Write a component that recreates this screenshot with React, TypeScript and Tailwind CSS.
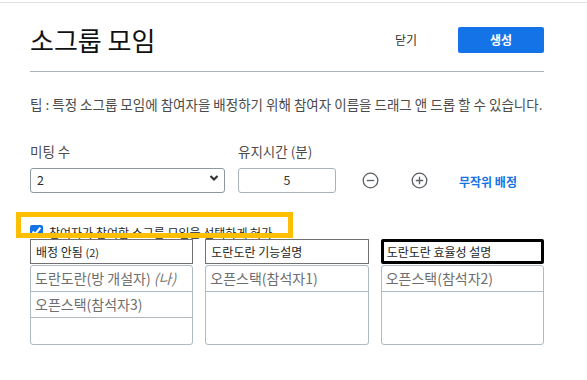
import React from "react";

const font = { fontFamily: '"Noto Sans CJK KR", "Noto Sans", sans-serif' };

function Column({ title, items, focused }: { title: React.ReactNode; items: React.ReactNode[]; focused?: boolean }) {
  return (
    <div className="flex flex-col">
      <div
        className={
          focused
            ? "h-[25px] border-[3px] border-black rounded-[2px] px-[3px] flex items-center text-[12px] text-[#1e1e1e]"
            : "h-[25px] border border-[#707070] px-[5px] flex items-center text-[12px] text-[#1e1e1e]"
        }
      >
        {title}
      </div>
      <div className="mt-[1px] h-[80px] border border-[#b0b8c0] rounded-[3px] overflow-hidden">
        {items.map((it, i) => (
          <div key={i} className="h-[26px] border-b border-[#b0b8c0] px-[4px] flex items-center text-[14px] text-[#6e6e6e]">
            {it}
          </div>
        ))}
      </div>
    </div>
  );
}

export default function App() {
  return (
    <div className="w-[587px] h-[380px] bg-white overflow-hidden" style={font}>
      <div className="mt-[2px] border-t border-[#e2e2e2]" />
      <div className="pl-[30px] w-[544px]">
        <div className="mt-[24px] h-[26px] flex items-center">
          <div className="text-[26px] text-[#111] leading-none flex-1">소그룹 모임</div>
          <div className="text-[12px] text-[#333] mr-[41px]">닫기</div>
          <button className="w-[86px] h-[26px] bg-[#1473e6] rounded-[2px] text-white text-[12px] font-bold">생성</button>
        </div>
        <div className="mt-[18px] border-b border-[#a6b2be]" />
        <div className="mt-[23px] text-[13.5px] text-[#4b4b4b] leading-[18px] whitespace-nowrap">
          팁 : 특정 소그룹 모임에 참여자을 배정하기 위해 참여자 이름을 드래그 앤 드롭 할 수 있습니다.
        </div>
        <div className="mt-[29px] flex text-[13.5px] text-[#4b4b4b] leading-[18px]">
          <div className="w-[208px]">미팅 수</div>
          <div>유지시간 (분)</div>
        </div>
        <div className="mt-[6px] flex items-start">
          <div className="relative w-[195px] h-[25px]">
            <select className="appearance-none w-full h-full border border-[#8f98a2] rounded-[3px] pl-[6px] text-[12.5px] text-[#2c2c2c] bg-white outline-none">
              <option>2</option>
            </select>
            <svg className="absolute right-[6px] top-[8px] pointer-events-none" width="10" height="8" viewBox="0 0 10 8">
              <path d="M1.5 2 L5 5.5 L8.5 2" fill="none" stroke="#333" strokeWidth="2.2" />
            </svg>
          </div>
          <div className="ml-[13px] mt-[2px] w-[98px] h-[25px] border border-[#a9b1b9] rounded-[3px] flex items-center justify-center text-[12.5px] text-[#333]">
            5
          </div>
          <svg className="ml-[26px] mt-[6px]" width="17" height="17" viewBox="0 0 17 17">
            <circle cx="8.5" cy="8.5" r="7.3" fill="none" stroke="#5a5f66" strokeWidth="1.3" />
            <path d="M4.8 8.5 H12.2" stroke="#5a5f66" strokeWidth="1.3" />
          </svg>
          <svg className="ml-[32px] mt-[6px]" width="17" height="17" viewBox="0 0 17 17">
            <circle cx="8.5" cy="8.5" r="7.3" fill="none" stroke="#5a5f66" strokeWidth="1.3" />
            <path d="M4.8 8.5 H12.2 M8.5 4.8 V12.2" stroke="#5a5f66" strokeWidth="1.3" />
          </svg>
          <div className="ml-[31px] mt-[8px] text-[12px] font-semibold text-[#1473e6] leading-[16px]">무작위 배정</div>
        </div>
        <div className="relative mt-[32px]">
          <div className="h-[14px] flex items-start overflow-hidden">
            <input type="checkbox" defaultChecked className="w-[13px] h-[13px] m-0 accent-[#1473e6]" />
            <span className="ml-[6px] text-[12px] text-[#1e1e1e] leading-[16px]">참여자가 참여할 소그룹 모임을 선택하게 허가</span>
          </div>
          <div className="absolute left-[-14px] top-[-13px] w-[277px] h-[26px] border-[5px] border-[#fdbf00] pointer-events-none" />
        </div>
        <div className="mt-[0px] grid grid-cols-3 gap-x-[12px] w-[514px]">
          <Column
            title={<span>배정 안됨 <span className="text-[11px]">(2)</span></span>}
            items={[
              <span>도란도란(방 개설자) <i className="text-[#777]">(나)</i></span>,
              <span>오픈스택(참석자3)</span>,
            ]}
          />
          <Column title="도란도란 기능설명" items={[<span>오픈스택(참석자1)</span>]} />
          <Column title="도란도란 효율성 설명" items={[<span>오픈스택(참석자2)</span>]} focused />
        </div>
      </div>
    </div>
  );
}
